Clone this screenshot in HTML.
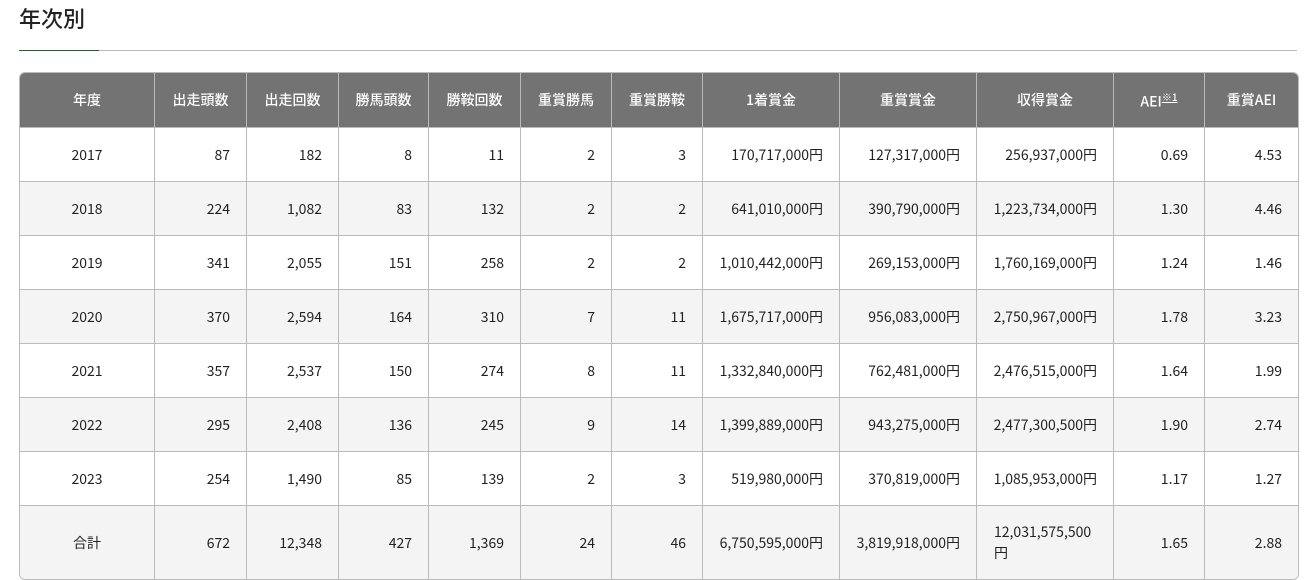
<!DOCTYPE html>
<html><head><meta charset="utf-8"><style>
body{margin:0;background:#fff;font-family:"Liberation Sans","Noto Sans CJK JP",sans-serif;color:#222;}
h2{position:absolute;left:19px;top:2px;margin:0;font-size:22px;font-weight:500;font-family:"Noto Sans CJK JP",sans-serif;}
.line{position:absolute;left:19px;top:50px;width:1278px;height:1px;background:#bbb;}
.line i{position:absolute;left:0;top:0;width:80px;height:1px;background:#1a6a2a;}
table{position:absolute;left:19px;top:72px;border-collapse:separate;border-spacing:0;font-family:"Noto Sans CJK JP",sans-serif;font-size:14px;border:1px solid #bbb;border-radius:6px;overflow:hidden;table-layout:fixed;width:1279px;}
th,td{border-right:1px solid #bbb;border-bottom:1px solid #bbb;padding:0 16px 0 4px;box-sizing:border-box;}
th:last-child,td:last-child{border-right:none;}
tr:last-child td{border-bottom:none;}
th{background:#737373;color:#fff;font-weight:500;height:55px;text-align:center;padding:0 2px;}
td{height:54px;text-align:right;}
td:first-child{text-align:center;padding:0;}
tr:nth-child(odd) td{background:#f4f4f4;}
tr.sum td{height:73px;}
sup{font-size:10px;text-decoration:underline;}
</style></head><body>
<h2>年次別</h2>
<div class="line"><i></i></div>
<table>
<colgroup><col style="width:135px"><col style="width:92px"><col style="width:92px"><col style="width:90px"><col style="width:92px"><col style="width:91px"><col style="width:91px"><col style="width:137px"><col style="width:137px"><col style="width:137px"><col style="width:91px"><col style="width:93px"></colgroup>
<tr><th>年度</th><th>出走頭数</th><th>出走回数</th><th>勝馬頭数</th><th>勝鞍回数</th><th>重賞勝馬</th><th>重賞勝鞍</th><th>1着賞金</th><th>重賞賞金</th><th>収得賞金</th><th>AEI<sup>※1</sup></th><th>重賞AEI</th></tr>
<tr><td>2017</td><td>87</td><td>182</td><td>8</td><td>11</td><td>2</td><td>3</td><td>170,717,000円</td><td>127,317,000円</td><td>256,937,000円</td><td>0.69</td><td>4.53</td></tr>
<tr><td>2018</td><td>224</td><td>1,082</td><td>83</td><td>132</td><td>2</td><td>2</td><td>641,010,000円</td><td>390,790,000円</td><td>1,223,734,000円</td><td>1.30</td><td>4.46</td></tr>
<tr><td>2019</td><td>341</td><td>2,055</td><td>151</td><td>258</td><td>2</td><td>2</td><td>1,010,442,000円</td><td>269,153,000円</td><td>1,760,169,000円</td><td>1.24</td><td>1.46</td></tr>
<tr><td>2020</td><td>370</td><td>2,594</td><td>164</td><td>310</td><td>7</td><td>11</td><td>1,675,717,000円</td><td>956,083,000円</td><td>2,750,967,000円</td><td>1.78</td><td>3.23</td></tr>
<tr><td>2021</td><td>357</td><td>2,537</td><td>150</td><td>274</td><td>8</td><td>11</td><td>1,332,840,000円</td><td>762,481,000円</td><td>2,476,515,000円</td><td>1.64</td><td>1.99</td></tr>
<tr><td>2022</td><td>295</td><td>2,408</td><td>136</td><td>245</td><td>9</td><td>14</td><td>1,399,889,000円</td><td>943,275,000円</td><td>2,477,300,500円</td><td>1.90</td><td>2.74</td></tr>
<tr><td>2023</td><td>254</td><td>1,490</td><td>85</td><td>139</td><td>2</td><td>3</td><td>519,980,000円</td><td>370,819,000円</td><td>1,085,953,000円</td><td>1.17</td><td>1.27</td></tr>
<tr class="sum"><td>合計</td><td>672</td><td>12,348</td><td>427</td><td>1,369</td><td>24</td><td>46</td><td>6,750,595,000円</td><td>3,819,918,000円</td><td style="text-align:left;padding-left:17px;line-height:21px">12,031,575,500<br>円</td><td>1.65</td><td>2.88</td></tr>
</table>
</body></html>
